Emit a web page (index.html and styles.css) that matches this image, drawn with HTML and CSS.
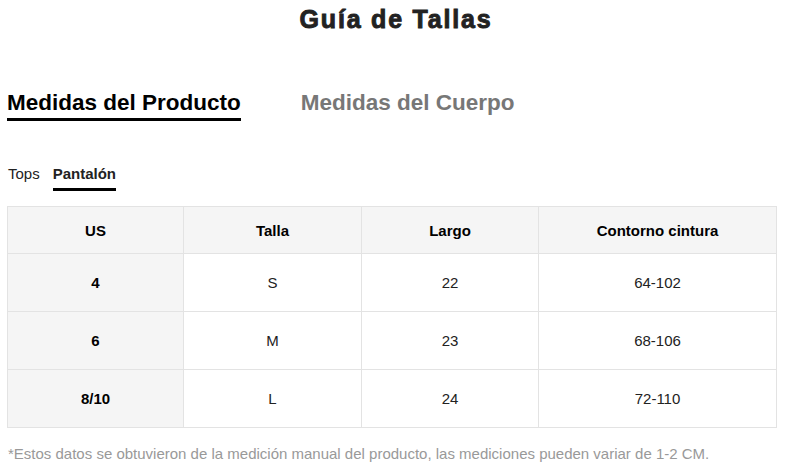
FILE: index.html
```html
<!DOCTYPE html>
<html lang="es">
<head>
<meta charset="utf-8">
<link rel="stylesheet" href="styles.css">
</head>
<body>
<div class="page">
  <h1 class="title">Guía de Tallas</h1>
  <div class="tabs">
    <div class="tab active">Medidas del Producto</div>
    <div class="tab">Medidas del Cuerpo</div>
  </div>
  <div class="subtabs">
    <div class="subtab">Tops</div>
    <div class="subtab active">Pantalón</div>
  </div>
  <table class="sizes">
    <colgroup>
      <col class="c1"><col class="c2"><col class="c3"><col class="c4">
    </colgroup>
    <thead>
      <tr><th>US</th><th>Talla</th><th>Largo</th><th>Contorno cintura</th></tr>
    </thead>
    <tbody>
      <tr><td class="key">4</td><td>S</td><td>22</td><td>64-102</td></tr>
      <tr><td class="key">6</td><td>M</td><td>23</td><td>68-106</td></tr>
      <tr><td class="key">8/10</td><td>L</td><td>24</td><td>72-110</td></tr>
    </tbody>
  </table>
  <p class="note">*Estos datos se obtuvieron de la medición manual del producto, las mediciones pueden variar de 1-2 CM.</p>
</div>
</body>
</html>
```
FILE: styles.css
```css
html, body {
  margin: 0;
  padding: 0;
  background: #fff;
}
body {
  font-family: "Liberation Sans", Arial, sans-serif;
  color: #222;
}
.page {
  padding: 0 11px 0 7px;
}
.title {
  margin: 0;
  padding-top: 1px;
  padding-left: 8px;
  font-size: 25px;
  line-height: 36px;
  font-weight: 700;
  text-align: center;
  letter-spacing: 1.8px;
  -webkit-text-stroke: 0.9px #222;
  color: #222;
}
.tabs {
  display: flex;
  gap: 60px;
  margin-top: 52px;
}
.tab {
  font-size: 22.5px;
  line-height: 28px;
  font-weight: 700;
  color: #777;
  padding-bottom: 1px;
  border-bottom: 3px solid transparent;
}
.tab.active {
  color: #000;
  border-bottom-color: #000;
}
.subtabs {
  display: flex;
  gap: 13px;
  margin-top: 43px;
  padding-left: 1px;
}
.subtab {
  font-size: 15px;
  line-height: 20px;
  color: #222;
  padding-bottom: 4px;
  border-bottom: 3px solid transparent;
}
.subtab.active {
  font-weight: 700;
  border-bottom-color: #000;
}
.sizes {
  margin-top: 15px;
  width: 769px;
  border-collapse: collapse;
  table-layout: fixed;
  font-size: 15px;
}
.c1 { width: 176px; }
.c2 { width: 178px; }
.c3 { width: 177px; }
.c4 { width: 238px; }
.sizes th, .sizes td {
  border: 1px solid #e3e3e3;
  text-align: center;
  vertical-align: middle;
  padding: 0;
}
.sizes th {
  height: 46px;
  background: #f5f5f5;
  font-weight: 700;
  color: #000;
}
.sizes td {
  height: 57px;
  color: #222;
}
.sizes td.key {
  background: #f5f5f5;
  font-weight: 700;
  color: #000;
}
.note {
  margin: 16px 0 0 1px;
  font-size: 15px;
  line-height: 20px;
  color: #999;
}
```
